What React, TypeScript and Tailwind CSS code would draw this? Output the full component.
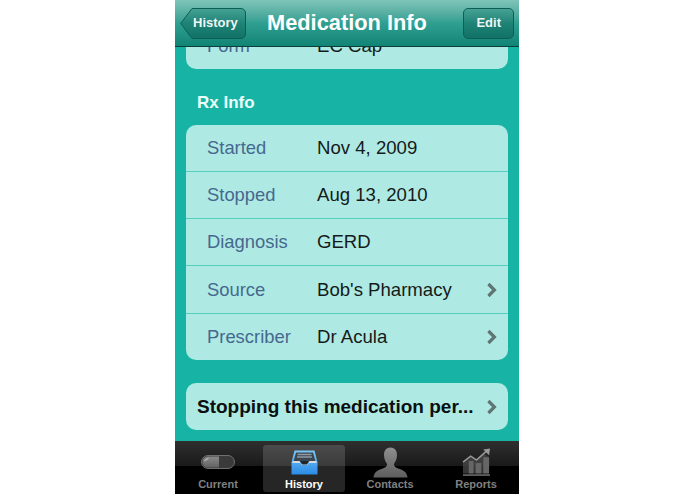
import React from "react";

const font = { fontFamily: '"Liberation Sans", Arial, sans-serif' };

function Chevron() {
  return (
    <svg width="12" height="16" viewBox="0 0 12 16" className="shrink-0">
      <path d="M2.4 2 L8.4 8 L2.4 14" fill="none" stroke="#5f7473" strokeWidth="3.2" />
    </svg>
  );
}

function Row({ label, value, chevron, last, tall }: { label: string; value: string; chevron?: boolean; last?: boolean; tall?: boolean }) {
  return (
    <div className={`flex items-center pl-[21px] pr-[10px] ${tall ? "h-[48px]" : last ? "h-[46px]" : "h-[47px]"} ${last ? "" : "border-b border-[#55cfc0]"}`}>
      <span className="w-[110px] shrink-0 text-[18.4px] text-[#46688f]">{label}</span>
      <span className="flex-1 text-[18.6px] text-[#151a1a]">{value}</span>
      {chevron && <Chevron />}
    </div>
  );
}

function PillIcon() {
  return (
    <svg width="34" height="14" viewBox="0 0 34 14">
      <defs>
        <linearGradient id="pl" x1="0" y1="0" x2="0" y2="1">
          <stop offset="0" stopColor="#8a8a8a" />
          <stop offset="1" stopColor="#626262" />
        </linearGradient>
      </defs>
      <rect x="0.5" y="0.5" width="33" height="13" rx="6.5" fill="#3a3a3a" stroke="#6f6f6f" />
      <path d="M7 1.5 H18 V12.5 H7 A5.5 5.5 0 0 1 7 1.5Z" fill="url(#pl)" />
      <path d="M4 5.5 L7 3.5" stroke="#b5b5b5" strokeWidth="1.5" strokeLinecap="round" />
    </svg>
  );
}

function TrayIcon() {
  return (
    <svg width="27" height="25" viewBox="0 0 27 25">
      <defs>
        <linearGradient id="tr" x1="0" y1="0" x2="0" y2="1">
          <stop offset="0" stopColor="#7cc8f7" />
          <stop offset="1" stopColor="#2a8ae6" />
        </linearGradient>
      </defs>
      <path d="M3.5 0.5 H23.5 L26.5 12 V24.5 H0.5 V12 Z" fill="url(#tr)" />
      <path d="M5 2.5 H22 L24.5 11.5 H2.5 Z" fill="#3c4650" />
      <path d="M6.5 4.5 H20.5 M6 7 H21" stroke="#8e99a3" strokeWidth="1.4" />
      <path d="M2 11 H8.5 L10.5 15 H16.5 L18.5 11 H25 L26 13 H1 Z" fill="#d4dce1" />
      <path d="M9 11 L11 14.5 H16 L18 11 Z" fill="#20262c" />
    </svg>
  );
}

function PersonIcon() {
  return (
    <svg width="35" height="31" viewBox="0 0 36 31">
      <defs>
        <linearGradient id="pe" x1="0" y1="0" x2="0" y2="1">
          <stop offset="0" stopColor="#8f8f8f" />
          <stop offset="1" stopColor="#5e5e5e" />
        </linearGradient>
      </defs>
      <path
        d="M18 0 C23 0 25 4 24.6 9 C24.3 13 22.5 15.5 21.5 17 C21.5 20 24 21 28 22.5 C32 24 35 26 35.5 31 H0.5 C1 26 4 24 8 22.5 C12 21 14.5 20 14.5 17 C13.5 15.5 11.7 13 11.4 9 C11 4 13 0 18 0Z"
        fill="url(#pe)"
      />
    </svg>
  );
}

function ChartIcon() {
  return (
    <svg width="29" height="29" viewBox="0 0 30 29">
      <path d="M1 15 L9 9 L15 13 L22 5 L28 9 V26 H1 Z" fill="#4a4a4a" opacity="0.75" />
      <path d="M7 13 H12 V26 H7 Z M14 15 H20 V26 H14 Z M22 9 H28 V26 H22 Z" fill="#666" />
      <path d="M1 14 L9 8 L15 12 L25 3" fill="none" stroke="#9a9a9a" strokeWidth="1.6" />
      <path d="M22 1 L29 0 L28 7 Z" fill="#9a9a9a" />
      <path d="M1 27.5 H29" stroke="#777" strokeWidth="1.5" />
    </svg>
  );
}

function Tab({ label, active, icon }: { label: string; active?: boolean; icon: React.ReactNode }) {
  return (
    <div
      className={`w-[82px] h-[47px] rounded-[3px] flex flex-col items-center justify-end pb-[1px] ${
        active ? "bg-white/15" : ""
      }`}
    >
      <div className="flex-1 flex items-center justify-center pt-[2px]">{icon}</div>
      <span className={`text-[11px] leading-[13px] font-bold ${active ? "text-white" : "text-[#808080]"}`}>{label}</span>
    </div>
  );
}

export default function App() {
  return (
    <div className="w-full h-[494px] bg-white overflow-hidden" style={font}>
      <div className="w-[344px] h-[494px] ml-[175px] flex flex-col overflow-hidden bg-[#17b3a4]">
        <header className="relative z-10 h-[47px] shrink-0 flex items-center justify-between pl-[5px] pr-[5px] border-b border-[#0c3f39] bg-gradient-to-b from-[#7fc4b9] via-[#2f9f91] to-[#0f8475]">
          <div className="relative flex items-center h-[31px] w-[66px] pl-[13px]">
            <svg width="66" height="31" viewBox="0 0 66 31" className="absolute left-0 top-0">
              <defs>
                <linearGradient id="bk" x1="0" y1="0" x2="0" y2="1">
                  <stop offset="0" stopColor="#45a294" />
                  <stop offset="0.5" stopColor="#1e8376" />
                  <stop offset="1" stopColor="#117266" />
                </linearGradient>
              </defs>
              <path d="M0.7 15.5 L12 0.5 H61 A4.5 4.5 0 0 1 65.5 5 V26 A4.5 4.5 0 0 1 61 30.5 H12 Z" fill="url(#bk)" stroke="#0d5f55" />
            </svg>
            <span className="relative text-[13px] font-bold text-white/95">History</span>
          </div>
          <h1 className="absolute left-[92px] top-[9px] text-[21.8px] leading-[27px] font-bold text-white">Medication Info</h1>
          <div className="flex items-center h-[31px] px-[12px] rounded-[5px] border border-[#0d5f55] bg-gradient-to-b from-[#45a294] via-[#1e8376] to-[#117266]">
            <span className="text-[13px] font-bold text-white/95">Edit</span>
          </div>
        </header>

        <main className="flex-1 overflow-hidden px-[11px]">
          <div className="-mt-[24px] bg-[#aeeae3] rounded-[10px]">
            <Row label="Form" value="EC Cap" last />
          </div>
          <h2 className="mt-[23px] ml-[11px] h-[33px] text-[17px] leading-[21px] font-bold text-[#eafffb]">Rx Info</h2>
          <div className="bg-[#aeeae3] rounded-[10px] overflow-hidden">
            <Row label="Started" value="Nov 4, 2009" />
            <Row label="Stopped" value="Aug 13, 2010" />
            <Row label="Diagnosis" value="GERD" />
            <Row label="Source" value="Bob's Pharmacy" chevron tall />
            <Row label="Prescriber" value="Dr Acula" chevron last />
          </div>
          <div className="mt-[23px] h-[47px] bg-[#aeeae3] rounded-[10px] flex items-center pl-[11px] pr-[10px] pt-[1px]">
            <span className="flex-1 text-[19px] font-bold text-[#0b0f0f] whitespace-nowrap">Stopping this medication per...</span>
            <Chevron />
          </div>
        </main>

        <nav className="h-[53px] shrink-0 flex items-center justify-between px-[2px] pt-[1px] bg-[linear-gradient(#2f2f2f,#191919_48%,#000_48%)]">
          <Tab label="Current" icon={<PillIcon />} />
          <Tab label="History" active icon={<TrayIcon />} />
          <Tab label="Contacts" icon={<PersonIcon />} />
          <Tab label="Reports" icon={<ChartIcon />} />
        </nav>
      </div>
    </div>
  );
}
